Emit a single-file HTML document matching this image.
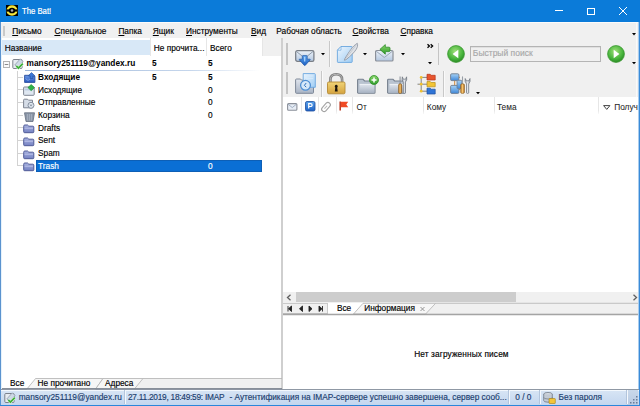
<!DOCTYPE html>
<html><head><meta charset="utf-8"><style>
*{margin:0;padding:0;box-sizing:border-box}
html,body{width:640px;height:406px;overflow:hidden;background:#f0f0f0}
body{position:relative;font-family:"Liberation Sans",sans-serif;font-size:8.3px;color:#000}
.a{position:absolute}
.t{position:absolute;white-space:nowrap;line-height:10px;-webkit-text-stroke:0.15px currentColor}
svg{position:absolute;overflow:visible}
u{text-decoration:underline;text-underline-offset:1px;text-decoration-thickness:1px}
</style></head><body>
<svg width="0" height="0" style="position:absolute"><defs>
<linearGradient id="gEnv" x1="0" y1="0" x2="0" y2="1"><stop offset="0" stop-color="#eef3f9"/><stop offset="1" stop-color="#b3c7e0"/></linearGradient>
<linearGradient id="gNote" x1="0" y1="0" x2="1" y2="1"><stop offset="0" stop-color="#eef6fd"/><stop offset="1" stop-color="#9fcdf5"/></linearGradient>
<linearGradient id="gBlue" x1="0" y1="0" x2="0" y2="1"><stop offset="0" stop-color="#5aa2ec"/><stop offset="1" stop-color="#1f62c4"/></linearGradient>
<linearGradient id="gGreen" x1="0" y1="0" x2="0" y2="1"><stop offset="0" stop-color="#8ad66a"/><stop offset="1" stop-color="#2d9a2a"/></linearGradient>
<radialGradient id="gBall" cx="0.45" cy="0.35" r="0.65"><stop offset="0" stop-color="#9fe07a"/><stop offset="0.7" stop-color="#45b23a"/><stop offset="1" stop-color="#2a8a25"/></radialGradient>
<linearGradient id="gGold" x1="0" y1="0" x2="0" y2="1"><stop offset="0" stop-color="#f1d477"/><stop offset="1" stop-color="#d4a23e"/></linearGradient>
<linearGradient id="gFold" x1="0" y1="0" x2="0" y2="1"><stop offset="0" stop-color="#e1e6ee"/><stop offset="1" stop-color="#a9b4c4"/></linearGradient>
<linearGradient id="gLav" x1="0" y1="0" x2="0" y2="1"><stop offset="0" stop-color="#a9b3e0"/><stop offset="1" stop-color="#7481c2"/></linearGradient>
<linearGradient id="gInbox" x1="0" y1="0" x2="0" y2="1"><stop offset="0" stop-color="#6d9ae6"/><stop offset="1" stop-color="#2a59c0"/></linearGradient>
<linearGradient id="gOr" x1="0" y1="0" x2="1" y2="0"><stop offset="0" stop-color="#c9802a"/><stop offset="0.5" stop-color="#f6c873"/><stop offset="1" stop-color="#b36a1a"/></linearGradient>
<linearGradient id="gWr" x1="0" y1="0" x2="1" y2="0"><stop offset="0" stop-color="#9ba2ad"/><stop offset="0.5" stop-color="#e6e9ee"/><stop offset="1" stop-color="#8d949f"/></linearGradient>
<linearGradient id="gScr" x1="0" y1="0" x2="0" y2="1"><stop offset="0" stop-color="#a6d2f6"/><stop offset="1" stop-color="#3f87d8"/></linearGradient>
</defs></svg>
<div class="a" style="left:0px;top:0px;width:640px;height:22px;background:#0b7bd9;"></div>
<svg style="left:6px;top:5px" width="12" height="11" viewBox="0 0 12 11"><rect width="12" height="11" fill="#000"/><ellipse cx="6" cy="5.5" rx="4.4" ry="4" fill="none" stroke="#f4e53c" stroke-width="2.3"/><rect x="0.3" y="4.4" width="11.4" height="2.2" fill="#000"/><circle cx="6" cy="5.5" r="1.3" fill="#aaa"/></svg>
<div class="t" style="left:22px;top:5.71px;font-size:9.2px;color:#fff;transform:scaleX(0.84);transform-origin:0 0;-webkit-text-stroke:0.2px #fff">The Bat!</div>
<div class="a" style="left:555px;top:10px;width:8px;height:1px;background:#fff;"></div>
<div class="a" style="left:587px;top:7.5px;width:8px;height:7px;background:transparent;border:1px solid #fff"></div>
<svg style="left:619px;top:7px" width="8" height="8" viewBox="0 0 8 8"><path d="M0 0L8 8M8 0L0 8" stroke="#fff" stroke-width="1"/></svg>
<div class="a" style="left:1px;top:22px;width:638px;height:16px;background:#f0f0f0;"></div>
<div class="a" style="left:1px;top:22px;width:638px;height:1px;background:#fbfbfb;"></div>
<div class="a" style="left:3px;top:25.5px;width:2px;height:10px;background:#c9c9c9;"></div>
<div class="t" style="left:12.2px;top:25.87px"><u>П</u>исьмо</div>
<div class="t" style="left:54.4px;top:25.87px"><u>С</u>пециальное</div>
<div class="t" style="left:118.4px;top:25.87px"><u>П</u>апка</div>
<div class="t" style="left:152.8px;top:25.87px"><u>Я</u>щик</div>
<div class="t" style="left:186px;top:25.87px"><u>И</u>нструменты</div>
<div class="t" style="left:251px;top:25.87px"><u>В</u>ид</div>
<div class="t" style="left:276.3px;top:25.87px">Рабочая область</div>
<div class="t" style="left:352.5px;top:25.87px"><u>С</u>войства</div>
<div class="t" style="left:400.4px;top:25.87px"><u>С</u>правка</div>
<svg style="left:632px;top:32.5px" width="4" height="3" viewBox="0 0 4 3"><path d="M0 0H4L2 2.5Z" fill="#000"/></svg>
<div class="a" style="left:1px;top:38px;width:280px;height:18px;background:#f0f0f0;"></div>
<div class="a" style="left:1px;top:38px;width:261px;height:18px;background:#fff;"></div>
<div class="a" style="left:1px;top:39.5px;width:149px;height:15.5px;background:#d8e8f7;"></div>
<div class="a" style="left:150px;top:38px;width:112px;height:18px;background:#ffffff;"></div>
<div class="a" style="left:150px;top:38px;width:1px;height:18px;background:#e6e6e6;"></div>
<div class="a" style="left:205.5px;top:38px;width:1px;height:18px;background:#e6e6e6;"></div>
<div class="a" style="left:261.5px;top:38px;width:1px;height:18px;background:#e6e6e6;"></div>
<div class="t" style="left:4.8px;top:42.82px">Название</div>
<div class="t" style="left:153.8px;top:42.82px">Не прочита...</div>
<div class="t" style="left:210px;top:42.82px">Всего</div>
<div class="a" style="left:1px;top:56px;width:280px;height:322px;background:#fff;"></div>
<svg style="left:3px;top:60.5px" width="7" height="7" viewBox="0 0 7 7"><rect x="0.5" y="0.5" width="6" height="6" fill="#fafafa" stroke="#b4b4b4"/><path d="M1.7 3.5H5.3" stroke="#8a8a8a"/></svg>
<div class="t" style="left:26.6px;top:58.12px;font-weight:bold;-webkit-text-stroke:0">mansory251119@yandex.ru</div>
<div class="t" style="left:152px;top:58.12px;font-weight:bold;-webkit-text-stroke:0">5</div>
<div class="t" style="left:208px;top:58.12px;font-weight:bold;-webkit-text-stroke:0">5</div>
<div class="a" style="left:25px;top:69.5px;width:235px;height:1.3px;background:linear-gradient(90deg,#9db6d8,#c5d6ec 70%,rgba(255,255,255,0));"></div>
<div class="a" style="left:17.3px;top:71px;width:1px;height:95px;background:#d2d2d2;"></div>
<div class="a" style="left:18.3px;top:76.7px;width:4.5px;height:1px;background:#d2d2d2;"></div>
<div class="a" style="left:18.3px;top:89.37px;width:4.5px;height:1px;background:#d2d2d2;"></div>
<div class="a" style="left:18.3px;top:102.03px;width:4.5px;height:1px;background:#d2d2d2;"></div>
<div class="a" style="left:18.3px;top:114.7px;width:4.5px;height:1px;background:#d2d2d2;"></div>
<div class="a" style="left:18.3px;top:127.36999999999999px;width:4.5px;height:1px;background:#d2d2d2;"></div>
<div class="a" style="left:18.3px;top:140.03px;width:4.5px;height:1px;background:#d2d2d2;"></div>
<div class="a" style="left:18.3px;top:152.7px;width:4.5px;height:1px;background:#d2d2d2;"></div>
<div class="a" style="left:18.3px;top:165.39999999999998px;width:4.5px;height:1px;background:#d2d2d2;"></div>
<div class="a" style="left:36px;top:160px;width:226px;height:12px;background:#0a6fd5;box-shadow:inset 0 0 0 1px #0d5fb6"></div>
<div class="t" style="left:38px;top:72.12px;font-weight:bold;-webkit-text-stroke:0">Входящие</div>
<div class="t" style="left:38px;top:84.79px">Исходящие</div>
<div class="t" style="left:38px;top:97.45px">Отправленные</div>
<div class="t" style="left:38px;top:110.12px">Корзина</div>
<div class="t" style="left:38px;top:122.79px">Drafts</div>
<div class="t" style="left:38px;top:135.45px">Sent</div>
<div class="t" style="left:38px;top:148.12px">Spam</div>
<div class="t" style="left:38px;top:160.82px;color:#fff">Trash</div>
<div class="t" style="left:152px;top:72.12px;font-weight:bold;-webkit-text-stroke:0">5</div>
<div class="t" style="left:208px;top:72.12px;font-weight:bold;-webkit-text-stroke:0">5</div>
<div class="t" style="left:208px;top:84.79px">0</div>
<div class="t" style="left:208px;top:97.45px">0</div>
<div class="t" style="left:208px;top:110.12px">0</div>
<div class="t" style="left:208px;top:160.82px;color:#fff">0</div>
<div class="a" style="left:1px;top:378px;width:280px;height:11px;background:#f0f0f0;"></div>
<div class="a" style="left:281px;top:38px;width:2px;height:351px;background:#cfcfcf;"></div>
<div class="a" style="left:283px;top:38px;width:356px;height:59px;background:#f0f0f0;"></div>
<div class="a" style="left:283px;top:97px;width:356px;height:16px;background:#fff;"></div>
<div class="a" style="left:283px;top:113px;width:356px;height:179px;background:#fff;"></div>
<div class="a" style="left:301px;top:97px;width:1px;height:17px;background:linear-gradient(#e6e6e6 80%,#f8f8f8);"></div>
<div class="a" style="left:318px;top:97px;width:1px;height:17px;background:linear-gradient(#e6e6e6 80%,#f8f8f8);"></div>
<div class="a" style="left:335.5px;top:97px;width:1px;height:17px;background:linear-gradient(#e6e6e6 80%,#f8f8f8);"></div>
<div class="a" style="left:352px;top:97px;width:1px;height:17px;background:linear-gradient(#e6e6e6 80%,#f8f8f8);"></div>
<div class="a" style="left:422.5px;top:97px;width:1px;height:17px;background:linear-gradient(#e6e6e6 80%,#f8f8f8);"></div>
<div class="a" style="left:494px;top:97px;width:1px;height:17px;background:linear-gradient(#e6e6e6 80%,#f8f8f8);"></div>
<div class="a" style="left:598.3px;top:97px;width:1px;height:17px;background:linear-gradient(#e6e6e6 80%,#f8f8f8);"></div>
<div class="t" style="left:356.6px;top:101.72px;color:#262626;-webkit-text-stroke:0.05px #262626">От</div>
<div class="t" style="left:426.8px;top:101.72px;color:#262626;-webkit-text-stroke:0.05px #262626">Кому</div>
<div class="t" style="left:497px;top:101.72px;color:#262626;-webkit-text-stroke:0.05px #262626">Тема</div>
<div class="t" style="left:614.2px;top:101.72px;color:#262626;-webkit-text-stroke:0.05px #262626">Получ</div>
<div class="a" style="left:283px;top:292px;width:356px;height:10px;background:#f0f0f0;"></div>
<div class="a" style="left:296px;top:292px;width:220px;height:10px;background:#cdcdcd;"></div>
<div class="a" style="left:283px;top:302px;width:356px;height:14px;background:#f0f0f0;"></div>
<div class="a" style="left:283px;top:316px;width:356px;height:73px;background:#fff;"></div>
<div class="t" style="left:414.2px;top:348.82px;letter-spacing:0.12px">Нет загруженных писем</div>
<div class="a" style="left:0px;top:389px;width:640px;height:17px;background:linear-gradient(#d9e6f5,#c2d5ee);"></div>
<div class="a" style="left:0px;top:390px;width:640px;height:1px;background:#f3f8fd;"></div>
<div class="a" style="left:0px;top:388.6px;width:640px;height:1px;background:#8f98a4;"></div>
<div class="t" style="left:18.7px;top:392.12px;color:#1b3d6e">mansory251119@yandex.ru</div>
<div class="t" style="left:128px;top:392.12px;color:#1b3d6e;letter-spacing:-0.25px">27.11.2019, 18:49:59: IMAP</div>
<div class="t" style="left:229.4px;top:392.12px;color:#1b3d6e">- Аутентификация на IMAP-сервере успешно завершена, сервер сооб...</div>
<div class="t" style="left:515.3px;top:392.12px;color:#1b3d6e">0 / 0</div>
<div class="t" style="left:558.6px;top:392.12px;color:#1b3d6e">Без пароля</div>
<div class="a" style="left:286px;top:43px;width:1.5px;height:21.5px;background:#c4c4c4;"></div>
<div class="a" style="left:286px;top:71.5px;width:1.5px;height:22.5px;background:#c4c4c4;"></div>
<div class="a" style="left:437.5px;top:43px;width:1.5px;height:21.5px;background:#c4c4c4;"></div>
<div class="a" style="left:328.5px;top:41px;width:1px;height:26px;background:#c8c8c8;"></div>
<div class="a" style="left:329.5px;top:41px;width:1px;height:26px;background:#fafafa;"></div>
<div class="a" style="left:320.5px;top:70.5px;width:1px;height:26px;background:#c8c8c8;"></div>
<div class="a" style="left:321.5px;top:70.5px;width:1px;height:26px;background:#fafafa;"></div>
<div class="a" style="left:442.5px;top:70.5px;width:1px;height:26px;background:#c8c8c8;"></div>
<div class="a" style="left:443.5px;top:70.5px;width:1px;height:26px;background:#fafafa;"></div>
<svg style="left:295px;top:49.5px" width="20" height="17" viewBox="0 0 20 17"><rect x="0.7" y="0.7" width="18.2" height="10.6" rx="1.6" fill="url(#gEnv)" stroke="#7a7f87" stroke-width="1.3"/><path d="M1.5 1.5L9.75 8.2L18 1.5" fill="none" stroke="#8d9aab" stroke-width="1"/><path d="M7.3 6.3Q7.3 5.6 8 5.6H11.5Q12.2 5.6 12.2 6.3V9.2H14.8Q15.6 9.2 15.1 9.9L10.4 15.2Q9.75 15.8 9.1 15.2L4.4 9.9Q3.9 9.2 4.7 9.2H7.3Z" fill="url(#gBlue)" stroke="#1f58a8" stroke-width="0.7"/><path d="M9.75 6.8V11.5" stroke="#bfe0ff" stroke-width="1.1"/></svg>
<svg style="left:321px;top:53px" width="4" height="3" viewBox="0 0 4 3"><path d="M0 0H4L2.0 2.2Z" fill="#000"/></svg>
<svg style="left:336.5px;top:43px" width="21" height="20" viewBox="0 0 21 20"><path d="M4 3.5H14.5Q15.2 3.5 15.2 4.2V18.8Q15.2 19.4 14.5 19.4H1Q0.4 19.4 0.4 18.8V7.2Z" fill="url(#gNote)" stroke="#6aa6df" stroke-width="0.9"/><path d="M0.5 7.2L4 3.5V7.2Z" fill="#f4f9fe" stroke="#6aa6df" stroke-width="0.7" stroke-linejoin="round"/><path d="M20.3 0.3C21.6 4 19 8.5 9.2 16.6L7.4 17.3L7.9 15.5C12 9 15.5 3 20.3 0.3Z" fill="#dfe2e7" stroke="#8a929e" stroke-width="0.8"/><path d="M19.5 1.5L8.5 16" stroke="#a9b0ba" stroke-width="0.5"/></svg>
<svg style="left:362.6px;top:53px" width="4" height="3" viewBox="0 0 4 3"><path d="M0 0H4L2.0 2.2Z" fill="#000"/></svg>
<svg style="left:374.5px;top:43.5px" width="19" height="18" viewBox="0 0 19 18"><path d="M0.6 7.5Q0.6 6.5 1.8 6.5H16.8Q18 6.5 18 7.5V16Q18 17 16.8 17H1.8Q0.6 17 0.6 16Z" fill="url(#gEnv)" stroke="#8b9099" stroke-width="1.2"/><path d="M1.2 7.2L9.3 13.5L17.4 7.2" fill="none" stroke="#9aa7b8" stroke-width="1"/><path d="M4.9 5.4L10.3 0.6V3.2H14Q15 3.2 15 4.2V6.6Q15 7.6 14 7.6H10.3V10.2Z" fill="url(#gGreen)" stroke="#2d8a28" stroke-width="0.8" stroke-linejoin="round"/></svg>
<svg style="left:400.8px;top:53px" width="4" height="3" viewBox="0 0 4 3"><path d="M0 0H4L2.0 2.2Z" fill="#000"/></svg>
<svg style="left:427px;top:43.5px" width="7" height="4" viewBox="0 0 7 4"><path d="M0.5 0.3L2.4 2L0.5 3.7M3.7 0.3L5.6 2L3.7 3.7" fill="none" stroke="#000" stroke-width="1.3"/></svg>
<svg style="left:428px;top:62px" width="4" height="3" viewBox="0 0 4 3"><path d="M0 0H4L2.0 2.2Z" fill="#000"/></svg>
<svg style="left:446.5px;top:45px" width="18" height="18" viewBox="0 0 18 18"><circle cx="9" cy="9" r="8.4" fill="url(#gBall)" stroke="#3d9a33" stroke-width="0.8"/><path d="M11.3 4.8V13.2L5.6 9Z" fill="#fff"/></svg>
<svg style="left:606.5px;top:45px" width="18" height="18" viewBox="0 0 18 18"><circle cx="9" cy="9" r="8.4" fill="url(#gBall)" stroke="#3d9a33" stroke-width="0.8"/><path d="M6.7 4.8V13.2L12.4 9Z" fill="#fff"/></svg>
<div class="a" style="left:470px;top:45.5px;width:131px;height:16.5px;background:#f0f0f0;border:1px solid #b4b4b4;box-shadow:inset 0 1px 0 #e0e0e0"></div>
<div class="t" style="left:472.8px;top:48.05px;font-size:8.5px;color:#a8a8a8">Быстрый поиск</div>
<svg style="left:632px;top:62.3px" width="4" height="3" viewBox="0 0 4 3"><path d="M0 0H4L2.0 2.2Z" fill="#000"/></svg>
<svg style="left:294.5px;top:73px" width="21" height="21" viewBox="0 0 21 21"><path d="M0.6 7Q0.6 6 1.5 6H5.5L6.7 7.2H17.5Q18.5 7.2 18.5 8.2V19.5Q18.5 20.3 17.7 20.3H1.4Q0.6 20.3 0.6 19.5Z" fill="url(#gFold)" stroke="#7e8898" stroke-width="1"/><path d="M8.2 0.6H19.5Q20.3 0.6 20.3 1.4V14.3H8.2Z" fill="url(#gNote)" stroke="#6aa6df" stroke-width="0.9"/><path d="M10 3H18M10 5.5H18" stroke="#d8ebfb" stroke-width="0.8"/><circle cx="10.5" cy="12.3" r="4.9" fill="#d6e8f9" stroke="#4f8fd3" stroke-width="1.3"/><path d="M11.2 10L9.4 12.3L11.2 14.2" fill="none" stroke="#2d6fbe" stroke-width="1"/></svg>
<svg style="left:326.5px;top:72.5px" width="18.5" height="21.5" viewBox="0 0 18.5 21.5"><path d="M3.4 10V6.6Q3.4 1.3 9.25 1.3Q15.1 1.3 15.1 6.6V10" fill="none" stroke="#7b7b7b" stroke-width="2.6"/><path d="M3.4 9V6.6Q3.4 1.3 9.25 1.3Q15.1 1.3 15.1 6.6V9" fill="none" stroke="#cfcfcf" stroke-width="0.7"/><rect x="0.5" y="9" width="17.5" height="11.8" rx="1.3" fill="url(#gGold)" stroke="#b48a34" stroke-width="0.9"/><path d="M9.25 11.8A1.6 1.6 0 0 1 10.2 14.6L10.7 18.4H7.8L8.3 14.6A1.6 1.6 0 0 1 9.25 11.8Z" fill="#1d160c"/></svg>
<svg style="left:357px;top:78px" width="19" height="16" viewBox="0 0 19 16"><path d="M0.6 2.2Q0.6 1.3 1.5 1.3H6L7.6 3H17.3Q18 3 18 3.8V14.4Q18 15.2 17.3 15.2H1.3Q0.6 15.2 0.6 14.4Z" fill="#b9c3d0" stroke="#77818f" stroke-width="1.1"/><path d="M2.6 6.2H17.4V14.6H2.6Z" fill="url(#gFold)"/><path d="M2.6 6.4H17.4" stroke="#f4f6f9" stroke-width="0.8"/></svg>
<svg style="left:368.5px;top:74.5px" width="10" height="10" viewBox="0 0 10 10"><circle cx="5" cy="5" r="4.5" fill="url(#gGreen)" stroke="#2f8f2a" stroke-width="0.8"/><path d="M5 2.5V7.5M2.5 5H7.5" stroke="#fff" stroke-width="1.5"/></svg>
<svg style="left:386.8px;top:78px" width="19" height="16" viewBox="0 0 19 16"><path d="M0.6 2.2Q0.6 1.3 1.5 1.3H6L7.6 3H17.3Q18 3 18 3.8V14.4Q18 15.2 17.3 15.2H1.3Q0.6 15.2 0.6 14.4Z" fill="#b9c3d0" stroke="#77818f" stroke-width="1.1"/><path d="M2.6 6.2H17.4V14.6H2.6Z" fill="url(#gFold)"/><path d="M2.6 6.4H17.4" stroke="#f4f6f9" stroke-width="0.8"/></svg>
<svg style="left:397.5px;top:76px" width="10" height="18" viewBox="0 0 10 18"><path d="M2.1 0.6V8.5" stroke="#8d939c" stroke-width="1.1"/><path d="M0.6 9Q0.6 7.8 2.1 7.8Q3.7 7.8 3.7 9V16.6Q3.7 17.4 2.1 17.4Q0.6 17.4 0.6 16.6Z" fill="url(#gOr)" stroke="#7d5418" stroke-width="0.6"/><path d="M4.3 0.8Q3.3 3.8 5.3 6.3V16.8Q5.3 17.4 6.4 17.4Q7.4 17.4 7.4 16.8V6.3Q9.4 3.8 8.6 0.8L7.6 3.2H5.3Z" fill="url(#gWr)" stroke="#6b727d" stroke-width="0.7"/></svg>
<svg style="left:417px;top:73px" width="20" height="22" viewBox="0 0 20 22"><path d="M4.2 4.4V18.2M4.2 4.4H10M0.5 11.2H10M4.2 18.2H10" stroke="#777" stroke-width="0.9"/><circle cx="4.2" cy="4.4" r="1.4" fill="#f0c030"/><circle cx="4.2" cy="11.2" r="1.4" fill="#f0c030"/><circle cx="4.2" cy="18.2" r="1.4" fill="#f0c030"/><path d="M10 1.3H13.2L14.2 2.3H18.2V7H10Z" fill="#e8552e" stroke="#b5341a" stroke-width="0.7"/><path d="M10 8.5H13.2L14.2 9.5H18.2V13.8H10Z" fill="#f2c435" stroke="#b88f18" stroke-width="0.7"/><path d="M10 15.2H13.2L14.2 16.2H18.2V21H10Z" fill="#2f74d6" stroke="#1d4f9d" stroke-width="0.7"/></svg>
<svg style="left:449.5px;top:73px" width="21" height="21" viewBox="0 0 21 21"><path d="M4.7 7.6V12.4M8.9 4.3H10M8.9 16.4H10" stroke="#d08a3a" stroke-width="1"/><rect x="0.6" y="0.8" width="8.3" height="6.8" rx="1.2" fill="url(#gScr)" stroke="#6d7c90" stroke-width="0.9"/><rect x="0.6" y="12.4" width="8.3" height="8" rx="1.2" fill="url(#gScr)" stroke="#6d7c90" stroke-width="0.9"/><rect x="7" y="7.3" width="4.8" height="8.3" rx="0.8" fill="url(#gScr)" stroke="#6d7c90" stroke-width="0.8"/><path d="M12.5 3.4V11" stroke="#9aa0a8" stroke-width="1.1"/><path d="M10.7 11.8Q10.7 10.8 12.5 10.8Q14.4 10.8 14.4 11.8V19.6Q14.4 20.4 12.5 20.4Q10.7 20.4 10.7 19.6Z" fill="url(#gOr)" stroke="#7d5418" stroke-width="0.6"/><path d="M15.2 5.5Q14.4 8.5 16.5 11V19.8Q16.5 20.4 17.6 20.4Q18.7 20.4 18.7 19.8V11Q20.8 8.5 20 5.5L18.9 7.8H16.4Z" fill="url(#gWr)" stroke="#6b727d" stroke-width="0.7"/></svg>
<svg style="left:476px;top:92px" width="4" height="3" viewBox="0 0 4 3"><path d="M0 0H4L2.0 2.2Z" fill="#000"/></svg>
<svg style="left:287px;top:102.5px" width="10.5" height="8" viewBox="0 0 10.5 8"><rect x="0.6" y="0.6" width="9.3" height="6.6" rx="1" fill="#e7edf5" stroke="#8b9099" stroke-width="1.1"/><path d="M1.2 1.3L5.25 4.6L9.3 1.3" fill="none" stroke="#8fa0b6" stroke-width="0.8"/></svg>
<svg style="left:304.5px;top:100.8px" width="10.5" height="10.5" viewBox="0 0 10.5 10.5"><rect x="0.5" y="0.5" width="9.5" height="9.5" rx="1.5" fill="url(#gBlue)" stroke="#1e4f9e" stroke-width="0.8"/><path d="M3.7 7.6V2.6H5.5Q7.1 2.6 7.1 4.05Q7.1 5.5 5.5 5.5H3.7" fill="none" stroke="#fff" stroke-width="1.2"/></svg>
<svg style="left:321px;top:101.5px" width="10" height="10" viewBox="0 0 10 10"><g transform="rotate(42 5 5)"><rect x="2.6" y="-0.3" width="4.8" height="10.6" rx="2.4" fill="none" stroke="#a3a3a3" stroke-width="1.1"/><path d="M5 3.3V7.3" stroke="#b8b8b8" stroke-width="1"/></g></svg>
<svg style="left:338.5px;top:101.3px" width="10" height="10" viewBox="0 0 10 10"><path d="M1.2 0.6V9.6" stroke="#b8321a" stroke-width="1.5"/><path d="M1.8 0.8H9.2L7.3 3.5L9.2 6.2H1.8Z" fill="#f04a24"/></svg>
<svg style="left:602.5px;top:105px" width="7.5" height="5" viewBox="0 0 7.5 5"><path d="M0.6 0.6H6.9L3.75 4.4Z" fill="none" stroke="#444" stroke-width="1"/></svg>
<svg style="left:11.5px;top:57.5px" width="12" height="12" viewBox="0 0 12 12"><rect x="0.8" y="1.5" width="9.3" height="9" rx="1" fill="#e6ebf1" stroke="#6f7680" stroke-width="0.9"/><path d="M2.8 7L8.3 0.8L11 3.6L5.8 9.4Z" fill="#cdd9e6" stroke="#8a95a3" stroke-width="0.7"/><path d="M4.3 7.9L6.4 10.2L10.8 5.6" fill="none" stroke="#fff" stroke-width="2.8"/><path d="M4.3 7.9L6.4 10.2L10.8 5.6" fill="none" stroke="#41b23c" stroke-width="1.9"/></svg>
<svg style="left:23.5px;top:71.5px" width="11.5" height="11" viewBox="0 0 11.5 11"><path d="M0.6 3.3H5L6 4.2H10.9V10.4H0.6Z" fill="url(#gInbox)" stroke="#2a4f9e" stroke-width="0.9"/><path d="M7.5 0.6L10.9 3.8H8.9V6.5H6.2V3.8H4.2Z" fill="#3c78d8" stroke="#234f9c" stroke-width="0.6"/><path d="M1.5 6.5L4 8.5L6 7" fill="none" stroke="#8fb2ee" stroke-width="0.7"/></svg>
<svg style="left:23px;top:83.5px" width="12" height="12" viewBox="0 0 12 12"><rect x="0.6" y="3" width="10.6" height="8.3" rx="0.8" fill="#dfe7f1" stroke="#7d8490" stroke-width="1"/><path d="M1.8 5.5H10" stroke="#b9cde3" stroke-width="1.8"/><path d="M8.2 0.5L11.5 3.6L8.2 6.7L4.9 3.6Z" fill="#2fb34a" stroke="#198a2f" stroke-width="0.6"/></svg>
<svg style="left:23px;top:97.5px" width="12" height="11" viewBox="0 0 12 11"><path d="M0.6 2.2Q0.6 1.2 1.4 1.2H4.5L5.5 2.2H9.5V9.8H0.6Z" fill="#d6dde7" stroke="#7d8490" stroke-width="1"/><circle cx="8" cy="7.3" r="3" fill="#e4ebf3" stroke="#7a8595" stroke-width="0.9"/><path d="M6.7 6.5L9.3 8.2M9.3 6.5L6.7 8.2" stroke="#7a8595" stroke-width="0.7"/></svg>
<svg style="left:23.5px;top:111.5px" width="11" height="10" viewBox="0 0 11 10"><path d="M0.5 0.8H10.5L9 9.5H2Z" fill="#8c97a8" stroke="#656f80" stroke-width="0.8"/><path d="M3.5 2V8.5M5.5 2V8.5M7.5 2V8.5" stroke="#b3bccb" stroke-width="0.6"/></svg>
<svg style="left:23px;top:124.2px" width="11.5" height="9.5" viewBox="0 0 11.5 9.5"><path d="M0.7 2.3Q0.7 1 1.8 1H4.6L5.8 2.2H9.9Q10.8 2.2 10.8 3.1V7.8Q10.8 8.7 9.9 8.7H1.6Q0.7 8.7 0.7 7.8Z" fill="url(#gLav)" stroke="#515c97" stroke-width="1"/><path d="M1.5 4.3H10" stroke="#c6ccef" stroke-width="0.7"/></svg>
<svg style="left:23px;top:136.8px" width="11.5" height="9.5" viewBox="0 0 11.5 9.5"><path d="M0.7 2.3Q0.7 1 1.8 1H4.6L5.8 2.2H9.9Q10.8 2.2 10.8 3.1V7.8Q10.8 8.7 9.9 8.7H1.6Q0.7 8.7 0.7 7.8Z" fill="url(#gLav)" stroke="#515c97" stroke-width="1"/><path d="M1.5 4.3H10" stroke="#c6ccef" stroke-width="0.7"/></svg>
<svg style="left:23px;top:149.5px" width="11.5" height="9.5" viewBox="0 0 11.5 9.5"><path d="M0.7 2.3Q0.7 1 1.8 1H4.6L5.8 2.2H9.9Q10.8 2.2 10.8 3.1V7.8Q10.8 8.7 9.9 8.7H1.6Q0.7 8.7 0.7 7.8Z" fill="url(#gLav)" stroke="#515c97" stroke-width="1"/><path d="M1.5 4.3H10" stroke="#c6ccef" stroke-width="0.7"/></svg>
<svg style="left:23px;top:162px" width="11.5" height="9.5" viewBox="0 0 11.5 9.5"><path d="M0.7 2.3Q0.7 1 1.8 1H4.6L5.8 2.2H9.9Q10.8 2.2 10.8 3.1V7.8Q10.8 8.7 9.9 8.7H1.6Q0.7 8.7 0.7 7.8Z" fill="url(#gLav)" stroke="#515c97" stroke-width="1"/><path d="M1.5 4.3H10" stroke="#c6ccef" stroke-width="0.7"/></svg>
<div class="a" style="left:1px;top:378.5px;width:280px;height:10.5px;background:#f0f0f0;"></div>
<div class="a" style="left:1px;top:378px;width:34px;height:11px;background:#fff;"></div>
<svg style="left:0px;top:377px" width="282" height="13" viewBox="0 0 282 13"><path d="M26.9 12L35.6 1.5H103L95.6 12Z" fill="#f6f6f6" stroke="#b3b3b3" stroke-width="0.8" stroke-linejoin="round"/><path d="M95.6 12L103 1.5H143L134.4 12" fill="#f6f6f6" stroke="#b3b3b3" stroke-width="0.8"/><path d="M143 1.5H282" stroke="#b3b3b3" stroke-width="0.8"/><path d="M0 11.6H282" stroke="#7d8590" stroke-width="1"/></svg>
<div class="t" style="left:10px;top:378.37px">Все</div>
<div class="t" style="left:37.5px;top:378.37px">Не прочитано</div>
<div class="t" style="left:105px;top:378.37px">Адреса</div>
<svg style="left:286px;top:293.5px" width="6" height="7" viewBox="0 0 6 7"><path d="M4.5 0.8L1.5 3.5L4.5 6.2" fill="none" stroke="#606060" stroke-width="1.3"/></svg>
<svg style="left:632px;top:293.5px" width="6" height="7" viewBox="0 0 6 7"><path d="M1.5 0.8L4.5 3.5L1.5 6.2" fill="none" stroke="#606060" stroke-width="1.3"/></svg>
<div class="a" style="left:283px;top:302px;width:356px;height:13px;background:#f0f0f0;"></div>
<div class="a" style="left:327.5px;top:302.6px;width:36px;height:11.5px;background:#fff;"></div>
<div class="a" style="left:283px;top:302.6px;width:45px;height:11.2px;background:#f0f0f0;border:1px solid #c9c9c9;border-left:none"></div>
<svg style="left:283px;top:304px" width="45" height="10" viewBox="0 0 45 10"><path d="M5 2V7.5M5.5 4.75L8.5 2V7.5Z M16.5 4.75L19.5 2V7.5Z M26 2V7.5L29 4.75Z M36 2V7.5L39 4.75Z M39.5 2V7.5" fill="#222" stroke="#222" stroke-width="0.9"/></svg>
<svg style="left:283px;top:302px" width="356" height="14" viewBox="0 0 356 14"><path d="M70.5 12L80 1.3H152.6L142.6 12Z" fill="#f7f7f7" stroke="#b3b3b3" stroke-width="0.8" stroke-linejoin="round"/><path d="M152.6 1.3H356" stroke="#b3b3b3" stroke-width="0.8"/><path d="M137.5 5L141.5 9M141.5 5L137.5 9" stroke="#8a8a8a" stroke-width="0.9"/><path d="M0 12.3H356" stroke="#7d7d7d" stroke-width="1"/><path d="M0 13.3H356" stroke="#e6e6e6" stroke-width="1"/></svg>
<div class="t" style="left:336.9px;top:303.12px">Все</div>
<div class="t" style="left:364.2px;top:303.12px">Информация</div>
<div class="a" style="left:627px;top:390px;width:11px;height:15px;background:linear-gradient(#c9d8ea,#b8cae2);"></div>
<div class="a" style="left:123.5px;top:390px;width:1px;height:14px;background:#b3c5dc;"></div>
<div class="a" style="left:124.5px;top:390px;width:1px;height:14px;background:#f4f8fd;"></div>
<div class="a" style="left:507.7px;top:390px;width:1px;height:14px;background:#b3c5dc;"></div>
<div class="a" style="left:508.7px;top:390px;width:1px;height:14px;background:#f4f8fd;"></div>
<div class="a" style="left:539.4px;top:390px;width:1px;height:14px;background:#b3c5dc;"></div>
<div class="a" style="left:540.4px;top:390px;width:1px;height:14px;background:#f4f8fd;"></div>
<div class="a" style="left:625.5px;top:390px;width:1px;height:14px;background:#b3c5dc;"></div>
<div class="a" style="left:626.5px;top:390px;width:1px;height:14px;background:#f4f8fd;"></div>
<svg style="left:4px;top:392px" width="12" height="12" viewBox="0 0 12 12"><rect x="0.8" y="1.5" width="9.3" height="9" rx="1" fill="#e6ebf1" stroke="#6f7680" stroke-width="0.9"/><path d="M2.8 7L8.3 0.8L11 3.6L5.8 9.4Z" fill="#cdd9e6" stroke="#8a95a3" stroke-width="0.7"/><path d="M4.3 7.9L6.4 10.2L10.8 5.6" fill="none" stroke="#fff" stroke-width="2.8"/><path d="M4.3 7.9L6.4 10.2L10.8 5.6" fill="none" stroke="#41b23c" stroke-width="1.9"/></svg>
<svg style="left:542.5px;top:391.5px" width="13" height="12" viewBox="0 0 13 12"><ellipse cx="5" cy="2.2" rx="4.3" ry="1.7" fill="#d8dde4" stroke="#6f7885" stroke-width="0.8"/><path d="M0.7 2.2V8.5Q0.7 10.2 5 10.2Q9.3 10.2 9.3 8.5V2.2" fill="#c3cad4" stroke="#6f7885" stroke-width="0.8"/><path d="M0.7 5.3Q0.7 7 5 7Q9.3 7 9.3 5.3" fill="none" stroke="#6f7885" stroke-width="0.7"/><rect x="6" y="6.5" width="6.3" height="5" rx="0.6" fill="#f2c53a" stroke="#a57f12" stroke-width="0.6"/></svg>
<svg style="left:629.5px;top:396px" width="9" height="9" viewBox="0 0 9 9"><g fill="#6a7d99"><rect x="6" y="0" width="1.5" height="1.5"/><rect x="3" y="3" width="1.5" height="1.5"/><rect x="6" y="3" width="1.5" height="1.5"/><rect x="0" y="6" width="1.5" height="1.5"/><rect x="3" y="6" width="1.5" height="1.5"/><rect x="6" y="6" width="1.5" height="1.5"/></g></svg>
<div class="a" style="left:0px;top:22px;width:1px;height:384px;background:#5b93cf;"></div>
<div class="a" style="left:1px;top:38px;width:1px;height:351px;background:#e6f2fb;"></div>
<div class="a" style="left:636px;top:22px;width:1px;height:75px;background:#fafafa;"></div>
<div class="a" style="left:638px;top:22px;width:1px;height:367px;background:#a9cdef;"></div>
<div class="a" style="left:639px;top:22px;width:1px;height:384px;background:#3a8bd8;"></div>
<div class="a" style="left:0px;top:405px;width:640px;height:1px;background:#2b86da;"></div>
</body></html>
